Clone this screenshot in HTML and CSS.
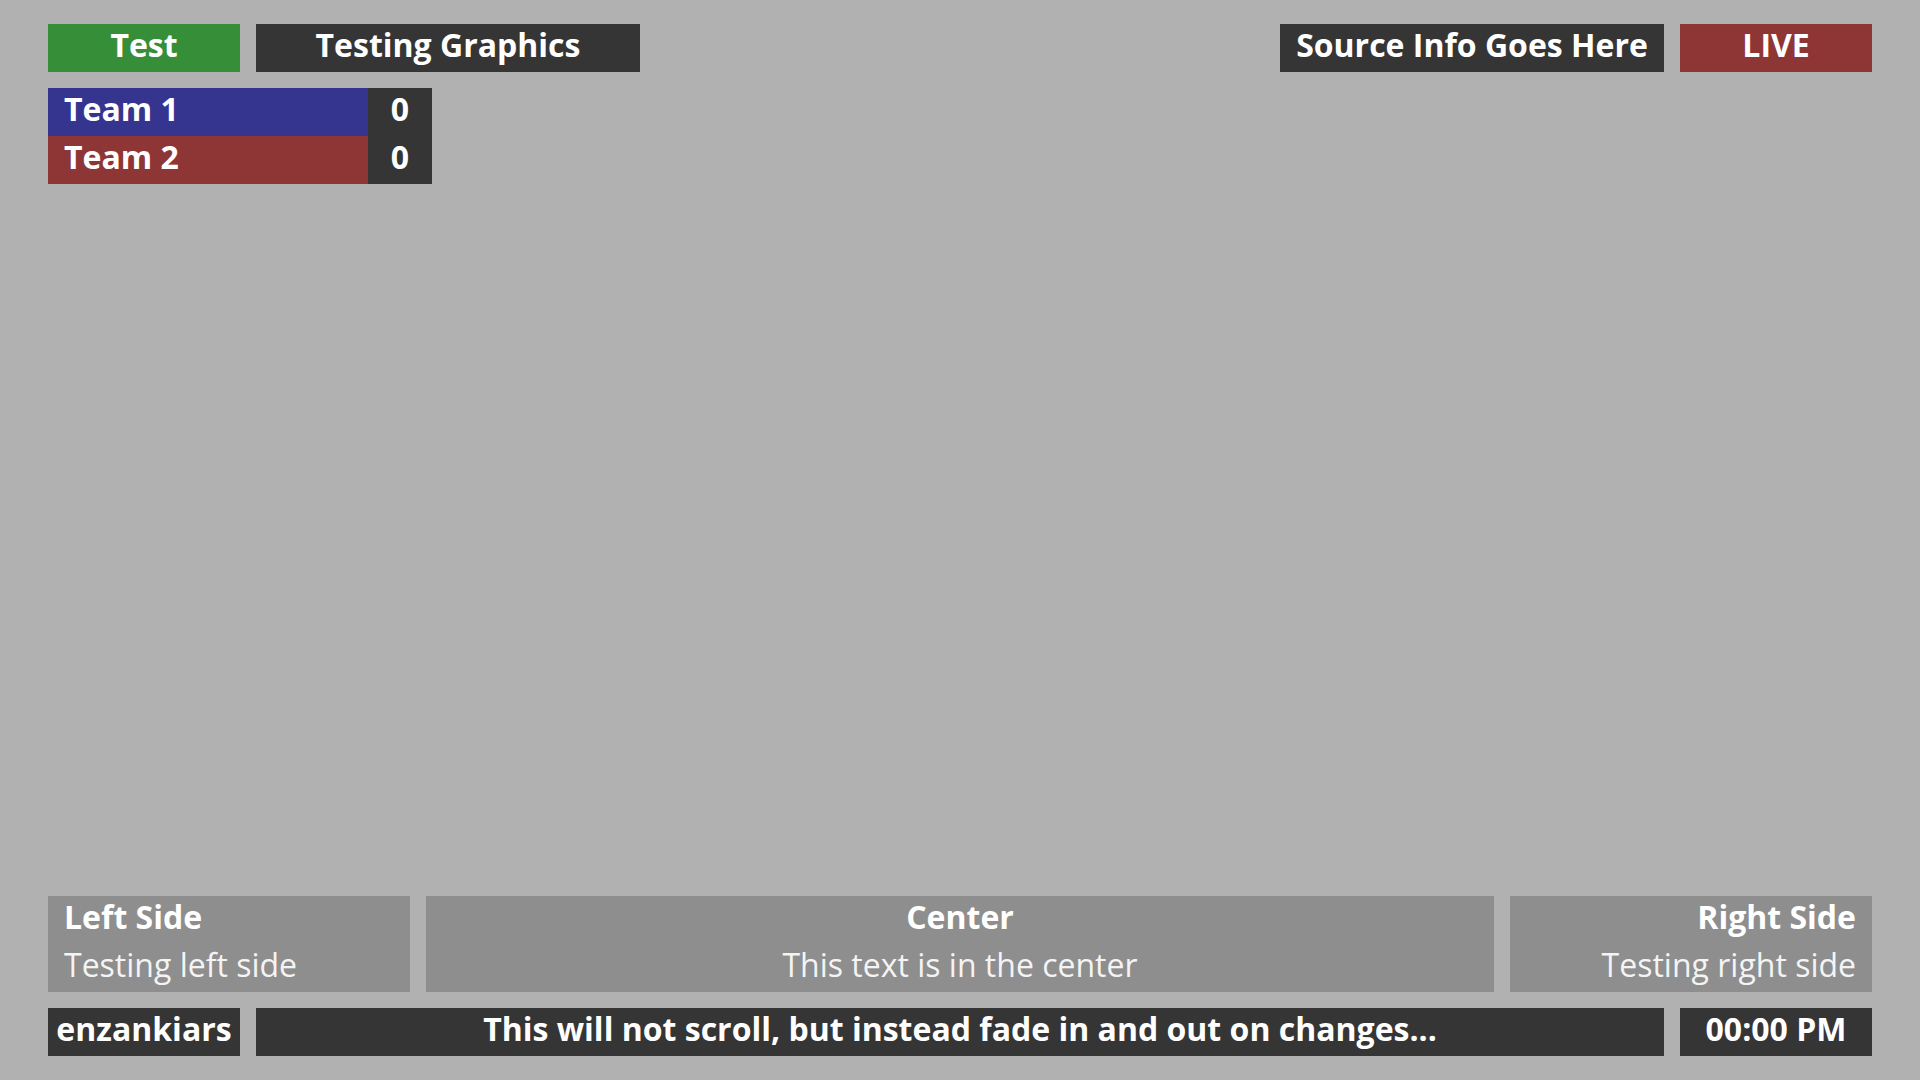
FILE: index.html
```html
<!DOCTYPE html>
<html>
<head>
<meta charset="utf-8">
<link rel="stylesheet" href="styles.css">
</head>
<body>
<div class="screen">
  <div class="top">
    <div class="header">
      <div class="group">
        <div class="tag tag-green w-small">Test</div>
        <div class="tag tag-dark w-large">Testing Graphics</div>
      </div>
      <div class="group">
        <div class="tag tag-dark w-large">Source Info Goes Here</div>
        <div class="tag tag-red w-small">LIVE</div>
      </div>
    </div>
    <div class="scoreboard">
      <div class="team-row">
        <div class="team-name team-blue">Team 1</div>
        <div class="team-score">0</div>
      </div>
      <div class="team-row">
        <div class="team-name team-red">Team 2</div>
        <div class="team-score">0</div>
      </div>
    </div>
  </div>
  <div class="bottom">
    <div class="lower-third">
      <div class="lt-box lt-side lt-left">
        <div class="lt-title">Left Side</div>
        <div class="lt-sub">Testing left side</div>
      </div>
      <div class="lt-box lt-center">
        <div class="lt-title">Center</div>
        <div class="lt-sub">This text is in the center</div>
      </div>
      <div class="lt-box lt-side lt-right">
        <div class="lt-title">Right Side</div>
        <div class="lt-sub">Testing right side</div>
      </div>
    </div>
    <div class="ticker">
      <div class="tag tag-dark w-small">enzankiars</div>
      <div class="tag tag-dark ticker-msg">This will not scroll, but instead fade in and out on changes...</div>
      <div class="tag tag-dark w-small">00:00 PM</div>
    </div>
  </div>
</div>
</body>
</html>
```
FILE: styles.css
```css
html, body {
  margin: 0;
  padding: 0;
  background: #b1b1b1;
}
body {
  font-family: "Open Sans", "Liberation Sans", sans-serif;
  color: #ffffff;
}
.screen {
  width: 1920px;
  height: 1080px;
  box-sizing: border-box;
  padding: 24px 48px;
  display: flex;
  flex-direction: column;
  justify-content: space-between;
}
.header {
  display: flex;
  justify-content: space-between;
}
.group {
  display: flex;
  gap: 16px;
}
.tag {
  height: 48px;
  line-height: 41px;
  font-size: 32px;
  font-weight: 700;
  text-align: center;
  white-space: nowrap;
  overflow: hidden;
}
.w-small { width: 192px; }
.w-large { width: 384px; }
.tag-green { background: #378e38; }
.tag-dark { background: #353535; }
.tag-red { background: #8e3535; }
.scoreboard {
  margin-top: 16px;
  width: 384px;
}
.team-row {
  display: flex;
  height: 48px;
  line-height: 41px;
  font-size: 32px;
  font-weight: 700;
}
.team-name {
  width: 320px;
  padding-left: 16px;
  box-sizing: border-box;
}
.team-blue { background: #35358f; }
.team-red { background: #8e3535; }
.team-score {
  flex: 1;
  background: #353535;
  text-align: center;
}
.bottom {
  display: flex;
  flex-direction: column;
  gap: 16px;
}
.lower-third {
  display: flex;
  gap: 16px;
}
.lt-box {
  background: #8e8e8e;
  height: 96px;
  box-sizing: border-box;
  padding: 0 16px;
  font-size: 32px;
}
.lt-side { width: 362px; }
.lt-center { flex: 1; text-align: center; }
.lt-left { text-align: left; }
.lt-right { text-align: right; }
.lt-title { font-weight: 700; line-height: 41px; }
.lt-sub { font-weight: 400; line-height: 55px; color: #f4f4f4; }
.ticker {
  display: flex;
  gap: 16px;
}
.ticker-msg { flex: 1; }
```
